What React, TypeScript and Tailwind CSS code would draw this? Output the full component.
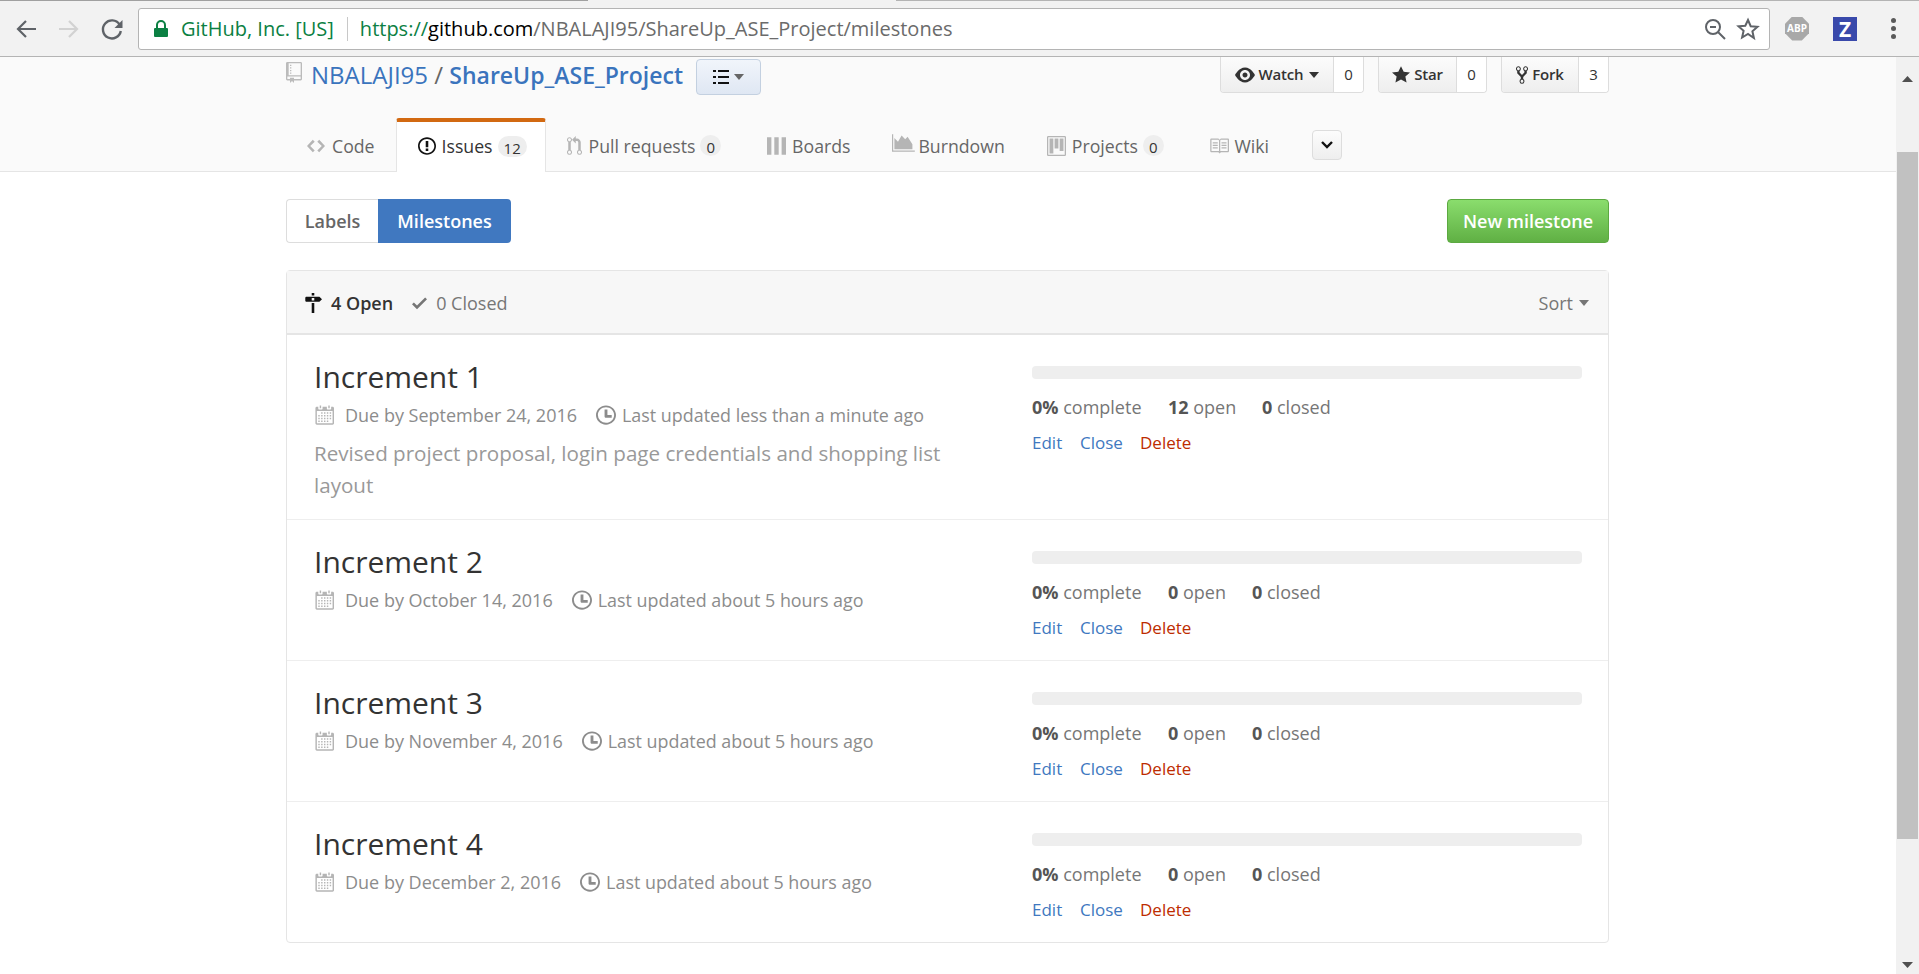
import React from 'react';

type IconProps = { d: string; w: number; h?: number; vw: number; vh?: number; className?: string };

function Octicon({ d, w, h = 20, vw, vh = 16, className = '' }: IconProps) {
  return (
    <svg width={w} height={h} viewBox={`0 0 ${vw} ${vh}`} preserveAspectRatio="none" className={`shrink-0 fill-current ${className}`}>
      <path fillRule="evenodd" d={d} />
    </svg>
  );
}

const icons = {
  repo: 'M4 9H3V8h1v1zm0-3H3v1h1V6zm0-2H3v1h1V4zm0-2H3v1h1V2zm8-1v12c0 .55-.45 1-1 1H6v2l-1.5-1.5L3 16v-2H1c-.55 0-1-.45-1-1V1c0-.55.45-1 1-1h10c.55 0 1 .45 1 1zm-1 10H1v2h2v-1h3v1h5v-2zm0-10H2v9h9V1z',
  code: 'M9.5 3L8 4.5 11.5 8 8 11.5 9.5 13 14 8 9.5 3zm-5 0L0 8l4.5 5L6 11.5 2.5 8 6 4.5 4.5 3z',
  issue: 'M7 2.3c3.14 0 5.7 2.56 5.7 5.7s-2.56 5.7-5.7 5.7A5.71 5.71 0 0 1 1.3 8c0-3.14 2.56-5.7 5.7-5.7zM7 1C3.14 1 0 4.14 0 8s3.14 7 7 7 7-3.14 7-7-3.14-7-7-7zm1 3H6v5h2V4zm0 6H6v2h2v-2z',
  pull: 'M11 11.28V5c-.03-.78-.34-1.47-.94-2.06C9.46 2.35 8.78 2.03 8 2H7V0L4 3l3 3V4h1c.27.02.48.11.69.31.21.2.3.42.31.69v6.28A1.993 1.993 0 0 0 10 15a1.993 1.993 0 0 0 1-3.72zm-1 2.92c-.66 0-1.2-.55-1.2-1.2 0-.65.55-1.2 1.2-1.2.65 0 1.2.55 1.2 1.2 0 .65-.55 1.2-1.2 1.2zM4 3c0-1.11-.89-2-2-2a1.993 1.993 0 0 0-1 3.72v6.56A1.993 1.993 0 0 0 2 15a1.993 1.993 0 0 0 1-3.72V4.72c.59-.34 1-.98 1-1.72zm-.8 10c0 .66-.55 1.2-1.2 1.2-.65 0-1.2-.55-1.2-1.2 0-.65.55-1.2 1.2-1.2.65 0 1.2.55 1.2 1.2zM2 4.2C1.34 4.2.8 3.65.8 3c0-.65.55-1.2 1.2-1.2.65 0 1.2.55 1.2 1.2 0 .65-.55 1.2-1.2 1.2z',
  boards: 'M0 1h3v14H0V1zm5 0h3v14H5V1zm5 0h3v14h-3V1z',
  burndown: 'M0 1h1v13h18v1H0V1zm2 12V4l3 3 3-5 3 3 2-2 4 6v4H2z',
  project: 'M10 12h3V2h-3v10zm-4-2h3V2H6v8zm-4 4h3V2H2v12zm-1 1h13V1H1v14zM14 0H1a1 1 0 0 0-1 1v14a1 1 0 0 0 1 1h13a1 1 0 0 0 1-1V1a1 1 0 0 0-1-1z',
  book: 'M3 5h4v1H3V5zm0 3h4V7H3v1zm0 2h4V9H3v1zm11-5h-4v1h4V5zm0 2h-4v1h4V7zm0 2h-4v1h4V9zm2-6v9c0 .55-.45 1-1 1H9.5l-1 1-1-1H2c-.55 0-1-.45-1-1V3c0-.55.45-1 1-1h5.5l1 1 1-1H15c.55 0 1 .45 1 1zm-8 .5L7.5 3H2v9h6V3.5zm7-.5H9.5l-.5.5V12h6V3z',
  milestone: 'M8 2H6V0h2v2zm4 5H2c-.55 0-1-.45-1-1V4c0-.55.45-1 1-1h10l2 2-2 2zM8 4H6v2h2V4zM6 16h2V8H6v8z',
  check: 'M12 5l-8 8-4-4 1.5-1.5L4 10l6.5-6.5L12 5z',
  calendar: 'M13 2h-1v1.5c0 .28-.22.5-.5.5h-2c-.28 0-.5-.22-.5-.5V2H6v1.5c0 .28-.22.5-.5.5h-2c-.28 0-.5-.22-.5-.5V2H2c-.55 0-1 .45-1 1v11c0 .55.45 1 1 1h11c.55 0 1-.45 1-1V3c0-.55-.45-1-1-1zm0 12H2V5h11v9zM5 3H4V1h1v2zm6 0h-1V1h1v2zM6 7H5V6h1v1zm2 0H7V6h1v1zm2 0H9V6h1v1zm2 0h-1V6h1v1zM4 9H3V8h1v1zm2 0H5V8h1v1zm2 0H7V8h1v1zm2 0H9V8h1v1zm2 0h-1V8h1v1zm-8 2H3v-1h1v1zm2 0H5v-1h1v1zm2 0H7v-1h1v1zm2 0H9v-1h1v1zm2 0h-1v-1h1v1zm-8 2H3v-1h1v1zm2 0H5v-1h1v1zm2 0H7v-1h1v1zm2 0H9v-1h1v1z',
  clock: 'M8 8h3v2H7c-.55 0-1-.45-1-1V4h2v4zM7 2.3c3.14 0 5.7 2.56 5.7 5.7s-2.56 5.7-5.7 5.7A5.71 5.71 0 0 1 1.3 8c0-3.14 2.56-5.7 5.7-5.7zM7 1C3.14 1 0 4.14 0 8s3.14 7 7 7 7-3.14 7-7-3.14-7-7-7z',
  eye: 'M8.06 2C3 2 0 8 0 8s3 6 8.06 6C13 14 16 8 16 8s-3-6-7.94-6zM8 12c-2.2 0-4-1.78-4-4 0-2.2 1.8-4 4-4 2.22 0 4 1.8 4 4 0 2.22-1.78 4-4 4zm2-4c0 1.11-.89 2-2 2-1.11 0-2-.89-2-2 0-1.11.89-2 2-2 1.11 0 2 .89 2 2z',
  star: 'M14 6l-4.9-.64L7 1 4.9 5.36 0 6l3.6 3.26L2.67 14 7 11.67 11.33 14l-.93-4.74L14 6z',
  fork: 'M8 1a1.993 1.993 0 0 0-1 3.72V6L5 8 3 6V4.72A1.993 1.993 0 0 0 2 1a1.993 1.993 0 0 0-1 3.72V6.5l3 3v1.78A1.993 1.993 0 0 0 5 15a1.993 1.993 0 0 0 1-3.72V9.5l3-3V4.72A1.993 1.993 0 0 0 8 1zM2 4.2C1.34 4.2.8 3.65.8 3c0-.65.55-1.2 1.2-1.2.65 0 1.2.55 1.2 1.2 0 .65-.55 1.2-1.2 1.2zm3 10c-.66 0-1.2-.55-1.2-1.2 0-.65.55-1.2 1.2-1.2.65 0 1.2.55 1.2 1.2 0 .65-.55 1.2-1.2 1.2zm3-10c-.66 0-1.2-.55-1.2-1.2 0-.65.55-1.2 1.2-1.2.65 0 1.2.55 1.2 1.2 0 .65-.55 1.2-1.2 1.2z',
};

function Caret({ className = '' }: { className?: string }) {
  return (
    <svg width="10" height="6" viewBox="0 0 10 6" className={`shrink-0 fill-current ${className}`}>
      <path d="M0 0h10L5 6z" />
    </svg>
  );
}

function BrowserBar() {
  return (
    <div className="h-[57px] shrink-0 bg-[#f2f2f2] border-b border-[#b4b4b4] flex flex-col text-[#5a5a5a]">
      {/* sliver of the tab strip left at the very top */}
      <div className="h-px flex">
        <div className="w-[588px] bg-[#a0a0a0]" />
        <div className="w-[308px]" />
        <div className="flex-1 bg-[#b4b4b4]" />
      </div>
      <div className="flex-1 flex items-center">
        <svg width="24" height="24" viewBox="0 0 24 24" className="ml-[15px] stroke-[#5f6368] fill-none" strokeWidth="2.2">
          <path d="M21 12H4M11 4l-8 8 8 8" />
        </svg>
        <svg width="24" height="24" viewBox="0 0 24 24" className="ml-[17px] stroke-[#d2d2d2] fill-none" strokeWidth="2.2">
          <path d="M3 12h17M13 4l8 8-8 8" />
        </svg>
        <svg width="24" height="24" viewBox="0 0 24 24" className="ml-[20px] stroke-[#5f6368] fill-none" strokeWidth="2.4">
          <path d="M19.5 7.5A9 9 0 1 0 20.8 14" />
          <path d="M22.5 3v8h-8z" fill="#5f6368" stroke="none" />
        </svg>
        <div className="ml-[14px] w-[1632px] h-[42px] bg-white border border-[#b4b4b4] rounded-[3px] flex items-center text-[20px]">
          <svg width="14" height="18" viewBox="0 0 14 18" className="ml-[15px] fill-[#0b8043]">
            <path d="M1 8h1V5a5 5 0 0 1 10 0v3h1a1 1 0 0 1 1 1v7a1 1 0 0 1-1 1H1a1 1 0 0 1-1-1V9a1 1 0 0 1 1-1zm3 0h6V5a3 3 0 0 0-6 0z" />
          </svg>
          <span className="ml-[13px] text-[#0b8043]">GitHub, Inc. [US]</span>
          <span className="ml-[13px] h-[24px] w-px bg-[#c8c8c8]" />
          <span className="ml-[12px] whitespace-nowrap">
            <span className="text-[#0b8043]">https://</span>
            <span className="text-black">github.com</span>
            <span className="text-[#6b6b6b]">/NBALAJI95/ShareUp_ASE_Project/milestones</span>
          </span>
          <svg width="24" height="24" viewBox="0 0 24 24" className="ml-auto stroke-[#5f6368] fill-none" strokeWidth="2">
            <circle cx="10" cy="10" r="7" />
            <path d="M15 15l7 7M7 10h6" />
          </svg>
          <svg width="24" height="24" viewBox="0 0 24 24" className="ml-[9px] mr-[9px] stroke-[#5f6368] fill-none" strokeWidth="2">
            <path d="M12 3l2.7 6.2 6.8.6-5.1 4.5 1.5 6.7L12 17l-5.9 3.5 1.5-6.7-5.1-4.5 6.8-.6z" />
          </svg>
        </div>
        <div className="ml-[15px] w-[24px] h-[24px] bg-[#a8a8a8] text-white text-[10px] font-bold flex items-center justify-center [clip-path:polygon(30%_0,70%_0,100%_30%,100%_70%,70%_100%,30%_100%,0_70%,0_30%)]">
          ABP
        </div>
        <div className="ml-[24px] w-[24px] h-[24px] bg-[#3949ab] text-white text-[21px] font-bold leading-[24px] text-center">Z</div>
        <div className="ml-[34px] flex flex-col gap-[3px]">
          <span className="w-[5px] h-[5px] rounded-full bg-[#5a5a5a]" />
          <span className="w-[5px] h-[5px] rounded-full bg-[#5a5a5a]" />
          <span className="w-[5px] h-[5px] rounded-full bg-[#5a5a5a]" />
        </div>
      </div>
    </div>
  );
}

function Social({ icon, w, vw, label, count, caret, width }: { icon: string; w: number; vw: number; label: string; count: string; caret?: boolean; width: string }) {
  return (
    <div className={`flex h-[36px] text-[15px] text-[#333] border border-t-0 border-[#dddddd] rounded-b-[4px] overflow-hidden ${width}`}>
      <div className="flex-1 flex items-center justify-center gap-[4px] font-semibold tracking-[-0.2px] bg-gradient-to-b from-[#fcfcfc] to-[#eeeeee] border-r border-[#dddddd]">
        <Octicon d={icon} w={w} vw={vw} />
        <span>{label}</span>
        {caret && <Caret className="ml-[2px]" />}
      </div>
      <div className="w-[29px] bg-white flex items-center justify-center">{count}</div>
    </div>
  );
}

function Badge({ n }: { n: string }) {
  return (
    <span className="ml-[5px] h-[21px] px-[6px] rounded-full bg-[#eeeeee] text-[#333] text-[15px] leading-[25px]">{n}</span>
  );
}

function TabNav() {
  return (
    <div className="h-[53px] border-b border-[#e5e5e5] flex items-end">
      <div className="w-[286px] shrink-0" />
      <div className="flex items-center h-[53px] w-[1323px] text-[17.7px] text-[#666]">
        <div className="flex items-center ml-[21px] pt-[3px]">
          <Octicon d={icons.code} w={18} vw={14} className="text-[#b5b5b5]" />
          <span className="ml-[7px]">Code</span>
        </div>
        <div className="ml-[21px] h-[54px] w-[150px] bg-white border-x border-[#e5e5e5] border-t-[4px] border-t-[#d26911] rounded-t-[3px] flex items-center text-[#333] pl-[21px] pb-[2px] self-start">
          <Octicon d={icons.issue} w={18} vw={14} className="text-[#111]" />
          <span className="ml-[6px]">Issues</span>
          <Badge n="12" />
        </div>
        <div className="flex items-center ml-[21px] pt-[3px]">
          <Octicon d={icons.pull} w={15} vw={12} className="text-[#b5b5b5]" />
          <span className="ml-[7px]">Pull requests</span>
          <Badge n="0" />
        </div>
        <div className="flex items-center ml-[46px] pt-[3px]">
          <Octicon d={icons.boards} w={19} vw={13} className="text-[#b5b5b5]" />
          <span className="ml-[6px]">Boards</span>
        </div>
        <div className="flex items-center ml-[42px] pt-[3px]">
          <Octicon d={icons.burndown} w={24} vw={20} className="text-[#b5b5b5] -mt-[5px]" />
          <span className="ml-[2px]">Burndown</span>
        </div>
        <div className="flex items-center ml-[42px] pt-[3px]">
          <Octicon d={icons.project} w={19} vw={15} className="text-[#b5b5b5]" />
          <span className="ml-[6px]">Projects</span>
          <Badge n="0" />
        </div>
        <div className="flex items-center ml-[45px] pt-[3px]">
          <Octicon d={icons.book} w={20} vw={16} className="text-[#b5b5b5]" />
          <span className="ml-[6px]">Wiki</span>
        </div>
        <button className="ml-[43px] mt-[1px] w-[30px] h-[30px] border border-[#dddddd] rounded-[4px] bg-gradient-to-b from-[#fcfcfc] to-[#eeeeee] flex items-center justify-center">
          <svg width="12" height="8" viewBox="0 0 12 8" className="fill-none stroke-[#111]" strokeWidth="2.4">
            <path d="M1 1l5 5 5-5" />
          </svg>
        </button>
      </div>
    </div>
  );
}

function RepoHead() {
  return (
    <div className="bg-[#fafafa]">
      <div className="h-[62px] flex">
        <div className="w-[286px] shrink-0" />
        <div className="w-[1323px] flex">
          <Octicon d={icons.repo} w={16} h={21} vw={12} className="text-[#bbbbbb] mt-[5px]" />
          <div className="ml-[9px] text-[24px] leading-[36px] text-[#3a74bd] whitespace-nowrap">
            NBALAJI95 <span className="text-[#666]">/</span> <span className="font-semibold text-[23px]">ShareUp_ASE_Project</span>
          </div>
          <button className="ml-[13px] mt-[2px] w-[65px] h-[36px] border border-[#c3d0e0] rounded-[4px] bg-gradient-to-b from-[#f1f5fb] to-[#dfe7f3] flex items-center justify-center gap-[5px]">
            <svg width="16" height="16" viewBox="0 0 16 16" className="fill-[#111]">
              <path d="M0 1h3v2H0zM5 1h11v2H5zM0 7h3v2H0zM5 7h11v2H5zM0 13h3v2H0zM5 13h11v2H5z" />
            </svg>
            <Caret className="text-[#666]" />
          </button>
          <div className="ml-auto flex gap-[14px]">
            <Social icon={icons.eye} w={20} vw={16} label="Watch" count="0" caret width="w-[144px]" />
            <Social icon={icons.star} w={18} vw={14} label="Star" count="0" width="w-[109px]" />
            <Social icon={icons.fork} w={12} vw={10} label="Fork" count="3" width="w-[108px]" />
          </div>
        </div>
      </div>
      <TabNav />
    </div>
  );
}

function Row({ title, due, updated, desc, open = '0', last }: { title: string; due: string; updated: string; desc?: string[]; open?: string; last?: boolean }) {
  return (
    <div className={`flex ${last ? 'min-h-[140px]' : 'min-h-[141px] border-b border-[#eeeeee]'}`}>
      <div className="w-[745px] pl-[27px] pt-[22px] pb-[18px]">
        <h2 className="text-[30px] leading-[40px] text-[#333] font-normal">{title}</h2>
        <div className="mt-[5px] flex items-center text-[18px] leading-[26px] text-[#8c8c8c]">
          <Octicon d={icons.calendar} w={20} h={22} vw={14} className="text-[#b5b5b5]" />
          <span className="ml-[11px]">{due}</span>
          <Octicon d={icons.clock} w={20} h={22} vw={14} className="ml-[19px] text-[#8c8c8c]" />
          <span className="ml-[6px] text-[17.9px]">{updated}</span>
        </div>
        {desc && (
          <div className="mt-[9px] text-[20.6px] leading-[32px] text-[#999]">
            {desc.map((line) => (
              <div key={line}>{line}</div>
            ))}
          </div>
        )}
      </div>
      <div className="w-[550px] pt-[31px]">
        <div className="h-[13px] rounded-[4px] bg-[#eeeeee]" />
        <div className="mt-[15px] flex text-[18px] leading-[26px] text-[#767676]">
          <span className="w-[136px]"><b className="font-bold text-[#555]">0%</b> complete</span>
          <span className={open === '12' ? 'w-[94px]' : 'w-[84px]'}><b className="font-bold text-[#555]">{open}</b> open</span>
          <span><b className="font-bold text-[#555]">0</b> closed</span>
        </div>
        <div className="mt-[10px] flex text-[17px] leading-[26px] text-[#4078c0]">
          <span className="w-[48px]">Edit</span>
          <span className="w-[60px]">Close</span>
          <span className="text-[#bd2c00]">Delete</span>
        </div>
      </div>
    </div>
  );
}

function Content() {
  return (
    <div className="pl-[286px] w-[1609px] pt-[27px]">
      <div className="flex justify-between h-[44px]">
        <div className="flex text-[18px] font-semibold">
          <div className="w-[92px] border border-r-0 border-[#dddddd] rounded-l-[4px] text-[#666] flex items-center justify-center">Labels</div>
          <div className="w-[133px] bg-[#4078c0] text-white rounded-r-[4px] flex items-center justify-center">Milestones</div>
        </div>
        <div className="w-[162px] bg-gradient-to-b from-[#8add6d] to-[#60b044] border border-[#5ca941] rounded-[4px] text-white text-[18px] font-semibold flex items-center justify-center">
          New milestone
        </div>
      </div>
      <div className="mt-[27px] border border-[#e5e5e5] rounded-[4px]">
        <div className="h-[64px] pt-[2px] bg-[#f7f7f7] border-b-2 border-[#e5e5e5] flex items-center text-[18px] pl-[17px] pr-[19px]">
          <Octicon d={icons.milestone} w={18} vw={14} className="text-[#111]" />
          <span className="ml-[9px] font-semibold text-[#333]">4 Open</span>
          <Octicon d={icons.check} w={15} vw={12} className="ml-[19px] text-[#767676]" />
          <span className="ml-[9px] text-[#767676]">0 Closed</span>
          <span className="ml-auto text-[#767676]">Sort</span>
          <Caret className="ml-[6px] text-[#767676]" />
        </div>
        <Row
          title="Increment 1"
          due="Due by September 24, 2016"
          updated="Last updated less than a minute ago"
          desc={['Revised project proposal, login page credentials and shopping list', 'layout']}
          open="12"
        />
        <Row title="Increment 2" due="Due by October 14, 2016" updated="Last updated about 5 hours ago" />
        <Row title="Increment 3" due="Due by November 4, 2016" updated="Last updated about 5 hours ago" />
        <Row title="Increment 4" due="Due by December 2, 2016" updated="Last updated about 5 hours ago" last />
      </div>
    </div>
  );
}

function Scrollbar() {
  return (
    <div className="w-[23px] shrink-0 bg-[#f1f1f1] flex flex-col items-center">
      <div className="h-[25px] flex items-end">
        <svg width="11" height="6" viewBox="0 0 11 6" className="fill-[#505050]"><path d="M0 6h11L5.5 0z" /></svg>
      </div>
      <div className="mt-[70px] h-[687px] w-[21px] bg-[#c1c1c1]" />
      <div className="mt-auto mb-[6px]">
        <svg width="11" height="6" viewBox="0 0 11 6" className="fill-[#505050]"><path d="M0 0h11L5.5 6z" /></svg>
      </div>
    </div>
  );
}

export default function App() {
  return (
    <div className="h-screen overflow-hidden flex flex-col bg-white font-['Open_Sans',sans-serif]">
      <BrowserBar />
      <div className="flex-1 flex min-h-0">
        <div className="flex-1 min-w-0 overflow-hidden">
          <RepoHead />
          <Content />
        </div>
        <Scrollbar />
      </div>
    </div>
  );
}
